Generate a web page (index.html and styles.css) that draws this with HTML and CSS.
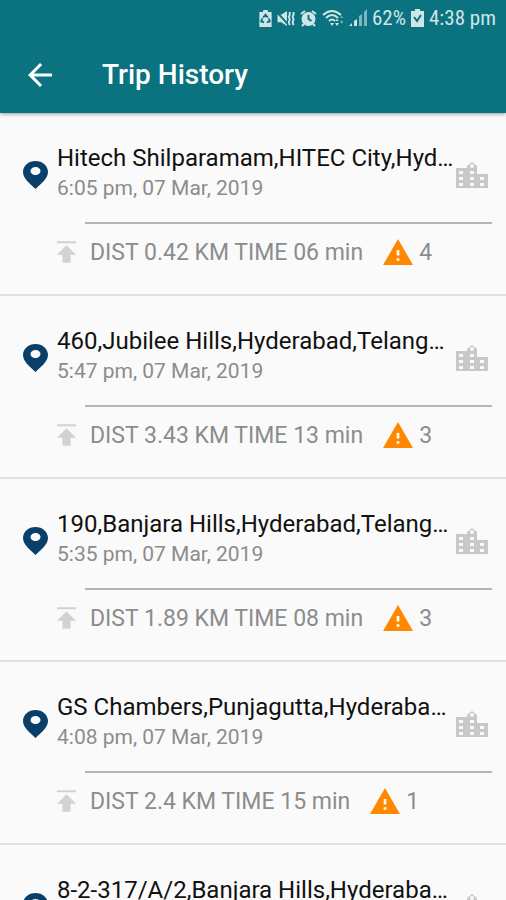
FILE: index.html
```html
<!DOCTYPE html>
<html lang="en">
<head>
    <meta charset="UTF-8">
    <meta name="viewport" content="width=device-width, initial-scale=1.0">
    <title>Trip History</title>
    <link rel="stylesheet" href="styles.css">
</head>
<body>
    <svg class="sprite" aria-hidden="true">
        <symbol id="pin" viewBox="0 0 25 28">
            <path fill-rule="evenodd" d="M12.5 0C5.6 0 0 4.8 0 11c0 6.500 7 11.500 12.500 17C18 22.500 25 17.500 25 11 25 4.800 19.400 0 12.500 0zm0 6c2.800 0 5 1.700 5 4s-2.200 4-5 4-5-1.700-5-4 2.200-4 5-4z"/>
        </symbol>
        <symbol id="city" viewBox="0 0 32 26">
            <path fill-rule="evenodd" d="M0 6h11V4l5-4 5 4v8h11v14H0zM3 9v3h4V9zM3 15v3h4v-3zM3 21v3h4v-3zM14 9v3h4V9zM14 15v3h4v-3zM14 21v3h4v-3zM24 15v3h4v-3zM24 21v3h4v-3zM16 2a2 2 0 1 0 0 4 2 2 0 0 0 0-4z"/>
        </symbol>
        <symbol id="upload" viewBox="5 4 14 16">
            <path d="M5 4v1.500h14V4zM5 14h4v6h6v-6h4l-7-7z"/>
        </symbol>
        <symbol id="warning" viewBox="1 2 22 19">
            <path d="M1 21h22L12 2 1 21zm12-3h-2v-2h2v2zm0-4h-2v-4h2v4z"/>
        </symbol>
    </svg>

    <header class="top">
        <div class="status-bar">
            <svg class="status-icon" width="13" height="17" viewBox="0 0 13 18">
                <path d="M4 0h5v2h4v16H0V2h4z"/>
                <path class="cutout" d="M4 8l2.500-3L9 8M10 9l1 3-3 1M3 9l-1 3 3 1"/>
            </svg>
            <svg class="status-icon" width="18" height="17" viewBox="0 0 18 18">
                <path d="M0 5h4l6-4v16l-6-4H0z"/>
                <path class="cutout" d="M0 3l12 13"/>
                <path class="stroke" d="M13 2v3l-1 2 1 3-1 3 1 3M17 2v3l-1 2 1 3-1 3 1 3"/>
            </svg>
            <svg class="status-icon" width="17" height="17" viewBox="0 0 17 17">
                <circle cx="8.500" cy="9" r="7"/>
                <path class="stroke" d="M1 4l4-3M16 4l-4-3M4 14l-2 2M13 14l2 2"/>
                <path class="cutout" d="M8.500 5v4l3 2"/>
            </svg>
            <svg class="status-icon wifi" width="22" height="18" viewBox="0 0 22 18">
                <path class="stroke" d="M1 6q9-8 18 0M4 9q6-6 12 0M7 12q3-3 6 0"/>
                <path d="M8 14h4l-2 3zM13 12h4l-2-2zM13 14h4l-2 3z"/>
                <path class="faint" d="M18 9h3l-1-2zM18 12h3l-1 3z"/>
            </svg>
            <svg class="status-icon" width="18" height="18" viewBox="0 0 18 18">
                <path d="M0 17l3-3v3zM5 12l3-2v7H5z"/>
                <path class="faint" d="M10 7l3-2v12h-3zM15 3l3-3v17h-3z"/>
            </svg>
            <span>62%</span>
            <svg class="status-icon" width="13" height="18" viewBox="0 0 13 18">
                <path d="M4 0h5v2h4v16H0V2h4z"/>
                <path class="cutout" d="M3 8l3 4 4-6"/>
            </svg>
            <span>4:38 pm</span>
        </div>
        <div class="app-bar">
            <button class="back" type="button" aria-label="Back">
                <svg width="36" height="36" viewBox="0 0 24 24">
                    <path d="M20 11H7.830l5.590-5.590L12 4l-8 8 8 8 1.410-1.410L7.830 13H20v-2z"/>
                </svg>
            </button>
            <h1>Trip History</h1>
        </div>
    </header>

    <main class="trips">
        <article class="trip">
            <div class="trip-head">
                <svg class="pin"><use href="#pin"/></svg>
                <div class="place">
                    <h2>Hitech Shilparamam,HITEC City,Hyd…</h2>
                    <p>6:05 pm, 07 Mar, 2019</p>
                </div>
                <svg class="city"><use href="#city"/></svg>
            </div>
            <div class="trip-stats">
                <svg class="upload"><use href="#upload"/></svg>
                <span>DIST 0.42 KM TIME 06 min</span>
                <svg class="warning"><use href="#warning"/></svg>
                <span>4</span>
            </div>
        </article>

        <article class="trip">
            <div class="trip-head">
                <svg class="pin"><use href="#pin"/></svg>
                <div class="place">
                    <h2>460,Jubilee Hills,Hyderabad,Telang…</h2>
                    <p>5:47 pm, 07 Mar, 2019</p>
                </div>
                <svg class="city"><use href="#city"/></svg>
            </div>
            <div class="trip-stats">
                <svg class="upload"><use href="#upload"/></svg>
                <span>DIST 3.43 KM TIME 13 min</span>
                <svg class="warning"><use href="#warning"/></svg>
                <span>3</span>
            </div>
        </article>

        <article class="trip">
            <div class="trip-head">
                <svg class="pin"><use href="#pin"/></svg>
                <div class="place">
                    <h2>190,Banjara Hills,Hyderabad,Telang…</h2>
                    <p>5:35 pm, 07 Mar, 2019</p>
                </div>
                <svg class="city"><use href="#city"/></svg>
            </div>
            <div class="trip-stats">
                <svg class="upload"><use href="#upload"/></svg>
                <span>DIST 1.89 KM TIME 08 min</span>
                <svg class="warning"><use href="#warning"/></svg>
                <span>3</span>
            </div>
        </article>

        <article class="trip">
            <div class="trip-head">
                <svg class="pin"><use href="#pin"/></svg>
                <div class="place">
                    <h2>GS Chambers,Punjagutta,Hyderaba…</h2>
                    <p>4:08 pm, 07 Mar, 2019</p>
                </div>
                <svg class="city"><use href="#city"/></svg>
            </div>
            <div class="trip-stats">
                <svg class="upload"><use href="#upload"/></svg>
                <span>DIST 2.4 KM TIME 15 min</span>
                <svg class="warning"><use href="#warning"/></svg>
                <span>1</span>
            </div>
        </article>

        <article class="trip">
            <div class="trip-head">
                <svg class="pin"><use href="#pin"/></svg>
                <div class="place">
                    <h2>8-2-317/A/2,Banjara Hills,Hyderaba…</h2>
                </div>
                <svg class="city"><use href="#city"/></svg>
            </div>
        </article>
    </main>
</body>
</html>
```
FILE: styles.css
```css
* {
    box-sizing: border-box;
}
body {
    margin: 0;
    height: 100vh;
    display: flex;
    flex-direction: column;
    font-family: Roboto, sans-serif;
    background-color: #fafafa;
    color: #111;
}
h1, h2, p {
    margin: 0;
    font-weight: 400;
}
svg {
    flex-shrink: 0;
}
.sprite {
    display: none;
}

/* header */
.top {
    flex-shrink: 0;
    position: relative;
    background-color: #0b7380;
    color: #fff;
    box-shadow: 0 1px 4px rgba(0, 0, 0, 0.4);
}
.status-bar {
    display: flex;
    align-items: center;
    justify-content: flex-end;
    gap: 5px;
    height: 36px;
    padding: 0 10px;
    font-family: "Roboto Condensed", Roboto, sans-serif;
    font-size: 21px;
    color: #cfe5e8;
}
.status-icon {
    fill: #cfe5e8;
}
.status-icon .stroke {
    fill: none;
    stroke: #cfe5e8;
    stroke-width: 2;
}
.status-icon .cutout {
    fill: none;
    stroke: #0b7380;
    stroke-width: 2;
}
.status-icon .faint {
    opacity: 0.6;
}
.app-bar {
    display: flex;
    align-items: center;
    gap: 44px;
    height: 77px;
    padding: 0 22px;
}
.back {
    display: flex;
    padding: 0;
    border: none;
    background: none;
    fill: #fff;
    cursor: pointer;
}
h1 {
    font-size: 28px;
    font-weight: 500;
}

/* list */
.trips {
    flex: 1;
    overflow-y: auto;
    scrollbar-width: none;
}
.trip {
    height: 183px;
    padding: 30px 14px 0 23px;
    border-bottom: 2px solid #e0e0e0;
}
.trip:last-child {
    border-bottom: none;
}
.trip-head {
    display: flex;
    align-items: center;
    height: 64px;
}
.pin {
    width: 25px;
    height: 28px;
    fill: #093f69;
}
.place {
    flex: 1;
    height: 64px;
    min-width: 0;
    padding-left: 9px;
    white-space: nowrap;
}
h2 {
    font-size: 24px;
    line-height: 30px;
}
.place p {
    font-size: 21px;
    line-height: 30px;
    color: #8c8c8c;
}
.city {
    width: 32px;
    height: 26px;
    margin-right: 4px;
    fill: #c8c8c8;
}
.trip-stats {
    display: flex;
    align-items: center;
    height: 58px;
    margin-top: 15px;
    margin-left: 62px;
    border-top: 2px solid #b5b5b5;
    font-size: 23px;
    color: #8c8c8c;
}
.upload {
    width: 19px;
    height: 22px;
    margin-left: -28px;
    margin-right: 14px;
    fill: #d2d2d2;
}
.warning {
    width: 30px;
    height: 26px;
    margin-left: 20px;
    margin-right: 6px;
    fill: #ff8800;
}
```
